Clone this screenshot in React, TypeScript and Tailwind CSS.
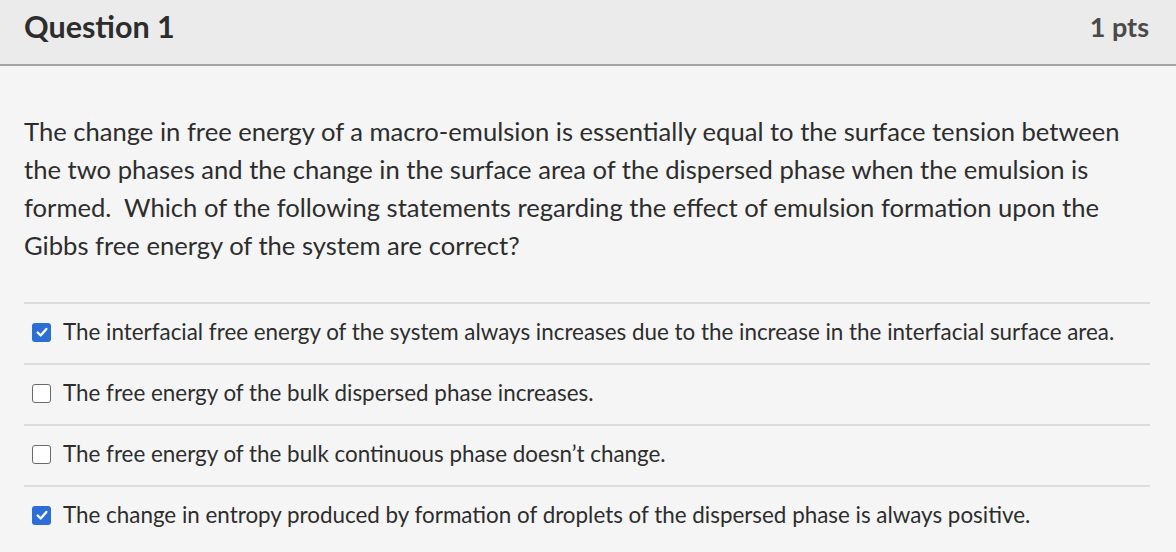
import React from "react";

const answers = [
  { text: "The interfacial free energy of the system always increases due to the increase in the interfacial surface area.", checked: true },
  { text: "The free energy of the bulk dispersed phase increases.", checked: false },
  { text: "The free energy of the bulk continuous phase doesn\u2019t change.", checked: false },
  { text: "The change in entropy produced by formation of droplets of the dispersed phase is always positive.", checked: true },
];

function Box({ checked }: { checked: boolean }) {
  if (checked) {
    return (
      <span className="flex h-[19px] w-[19px] shrink-0 items-center justify-center rounded-[3px] bg-[#2b6fd6]">
        <svg width="14" height="14" viewBox="0 0 16 16" fill="none">
          <path d="M3 8.5 L6.5 12 L13 4.5" stroke="white" strokeWidth="2.6" strokeLinecap="round" strokeLinejoin="round" />
        </svg>
      </span>
    );
  }
  return <span className="block h-[19px] w-[19px] shrink-0 rounded-[3px] border-[1.5px] border-[#6b6b6b] bg-white" />;
}

export default function App() {
  return (
    <div className="h-[552px] w-full overflow-hidden bg-[#f5f5f5] text-[#2d2d2d] [font-family:Lato,'Liberation_Sans',sans-serif]">
      <div className="flex h-[66px] items-center justify-between border-b-2 border-[#a3a3a3] bg-[#ebebeb] pb-[10px] pl-6 pr-[27px]">
        <h2 className="text-[30.5px] font-bold text-[#2d2d2d]">Question 1</h2>
        <span className="text-[27px] font-bold text-[#4a4a4a]">1 pts</span>
      </div>
      <div className="pl-6 pr-[26px] pt-[46px]">
        <p className="text-[25.6px] leading-[38px]">
          The change in free energy of a macro-emulsion is essentially equal to the surface tension between the two phases and the change in the surface area of the dispersed phase when the emulsion is formed.&nbsp; Which of the following statements regarding the effect of emulsion formation upon the Gibbs free energy of the system are correct?
        </p>
        <div className="mt-[38px]">
          {answers.map((a, i) => (
            <div key={i} className="flex h-[61px] items-center gap-[12px] border-t-2 border-[#dcdcdc] pl-[8px] pb-[3px]">
              <Box checked={a.checked} />
              <span className="text-[22.4px] text-[#2d2d2d]">{a.text}</span>
            </div>
          ))}
        </div>
      </div>
    </div>
  );
}
